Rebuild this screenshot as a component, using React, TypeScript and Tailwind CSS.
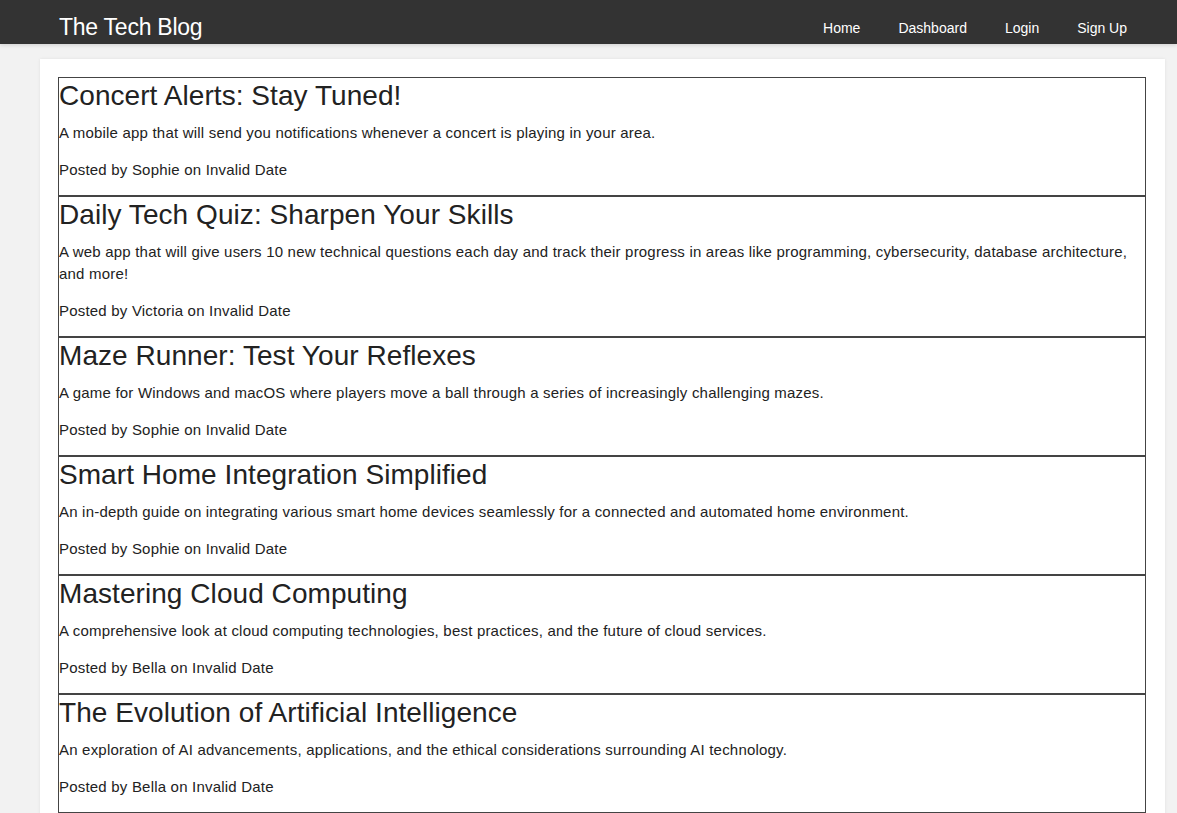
const posts = [
  {
    title: 'Concert Alerts: Stay Tuned!',
    body: 'A mobile app that will send you notifications whenever a concert is playing in your area.',
    author: 'Sophie',
  },
  {
    title: 'Daily Tech Quiz: Sharpen Your Skills',
    body: 'A web app that will give users 10 new technical questions each day and track their progress in areas like programming, cybersecurity, database architecture, and more!',
    author: 'Victoria',
  },
  {
    title: 'Maze Runner: Test Your Reflexes',
    body: 'A game for Windows and macOS where players move a ball through a series of increasingly challenging mazes.',
    author: 'Sophie',
  },
  {
    title: 'Smart Home Integration Simplified',
    body: 'An in-depth guide on integrating various smart home devices seamlessly for a connected and automated home environment.',
    author: 'Sophie',
  },
  {
    title: 'Mastering Cloud Computing',
    body: 'A comprehensive look at cloud computing technologies, best practices, and the future of cloud services.',
    author: 'Bella',
  },
  {
    title: 'The Evolution of Artificial Intelligence',
    body: 'An exploration of AI advancements, applications, and the ethical considerations surrounding AI technology.',
    author: 'Bella',
  },
];

const links = ['Home', 'Dashboard', 'Login', 'Sign Up'];

export default function App() {
  return (
    <div
      className="min-h-screen bg-[#f2f2f2] text-[#222]"
      style={{ fontFamily: '"Liberation Sans", Arial, sans-serif' }}
    >
      {/* Header */}
      <header className="h-[44px] bg-[#333] flex items-start justify-between pl-[59px] pr-[50px] shadow-[0_1px_4px_rgba(0,0,0,0.15)] relative">
        <a className="pt-[13px] text-[23px] leading-[28px] text-white tracking-[-0.25px]">
          The Tech Blog
        </a>
        <nav className="flex gap-[38px] pt-[20px]">
          {links.map((l) => (
            <a key={l} className="text-[14px] leading-[17px] text-white">
              {l}
            </a>
          ))}
        </nav>
      </header>

      {/* Posts */}
      <main className="ml-[40px] mt-[15px] w-[1125px] bg-white pt-[18px] pl-[18px] pr-[19px] pb-[20px] shadow-[0_0_3px_rgba(0,0,0,0.08)]">
        {posts.map((p, i) => (
          <article
            key={i}
            className="border border-[#444] pt-[2px] pb-[14px]"
          >
            <h2 className="text-[28px] leading-[32px] font-normal tracking-[0.06px] mb-[10px]">
              {p.title}
            </h2>
            <p className="text-[15px] leading-[22px] tracking-[0.2px]">{p.body}</p>
            <p className="text-[15px] leading-[22px] tracking-[0.2px] mt-[15px]">
              Posted by {p.author} on Invalid Date
            </p>
          </article>
        ))}
      </main>
    </div>
  );
}
